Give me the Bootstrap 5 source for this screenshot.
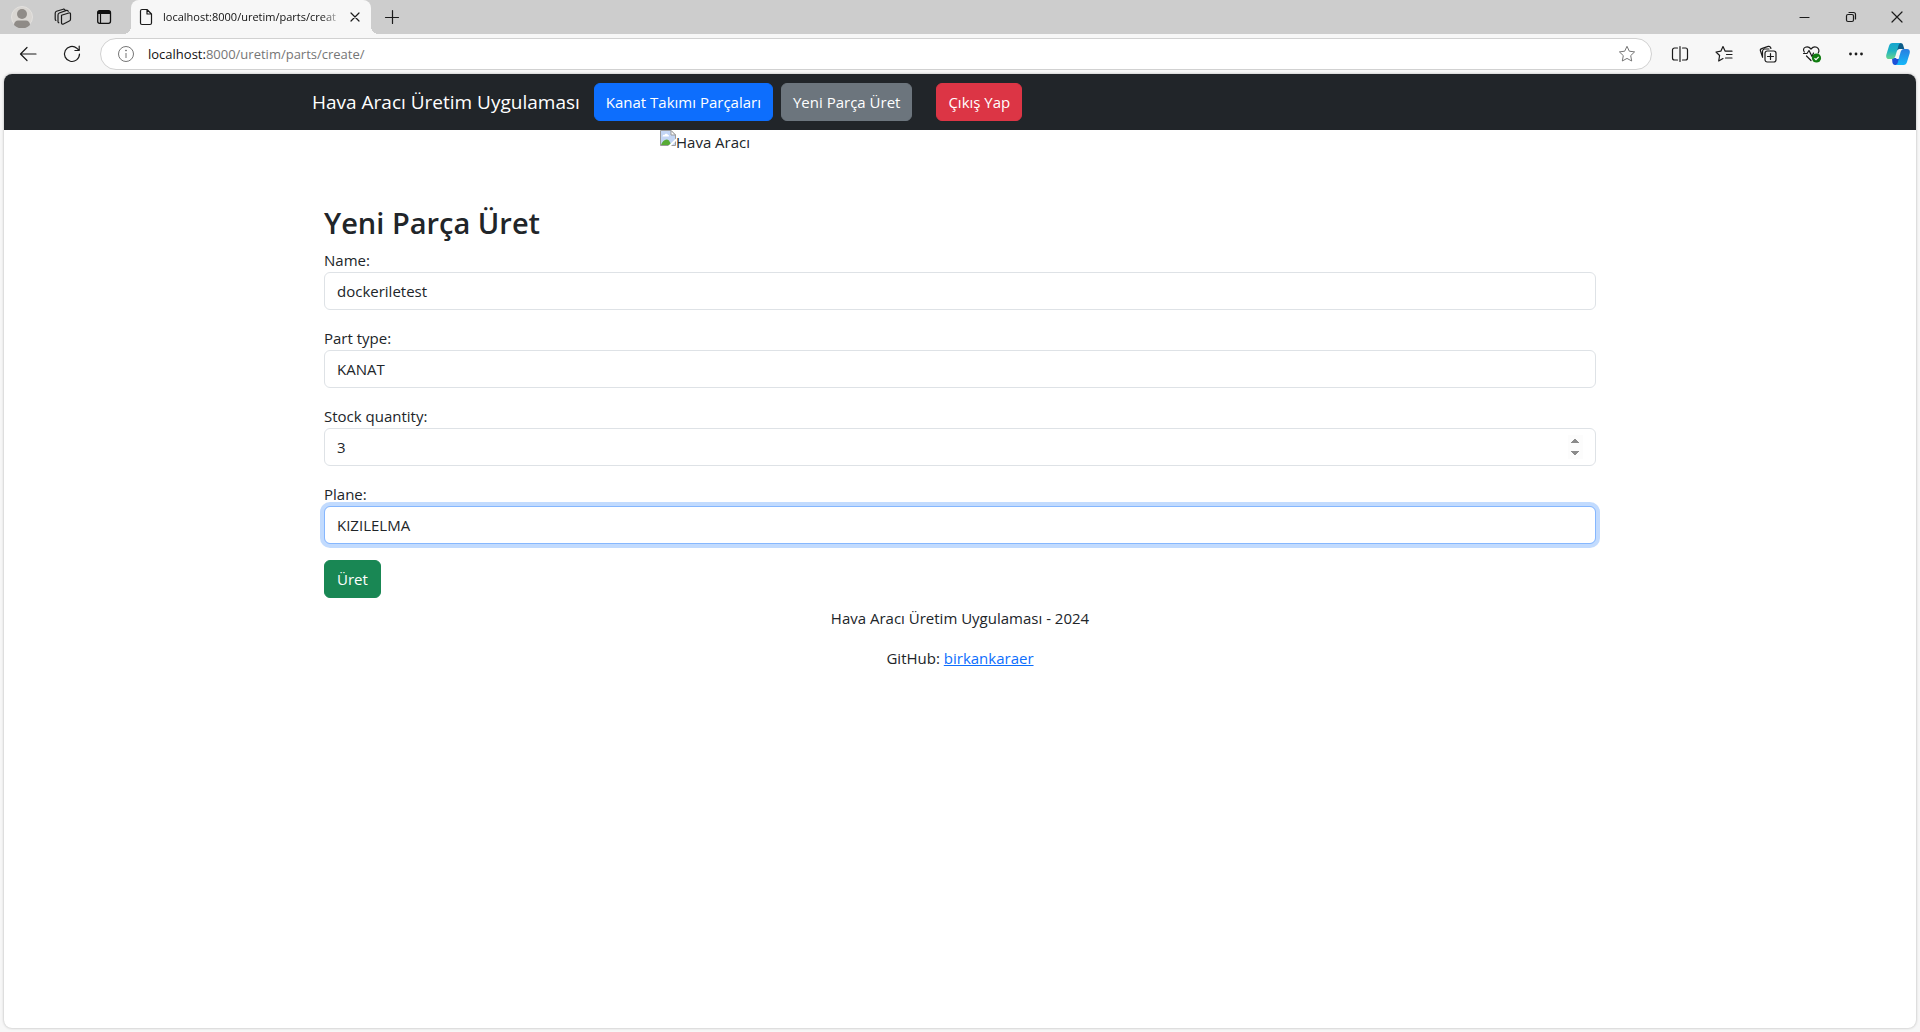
<!DOCTYPE html>
<html lang="tr">
<head>
<meta charset="utf-8">
<meta name="viewport" content="width=device-width, initial-scale=1">
<title>Yeni Parça Üret</title>
<link href="https://cdn.jsdelivr.net/npm/bootstrap@5.3.0/dist/css/bootstrap.min.css" rel="stylesheet">
<style>
:root { --ui-font: "Open Sans", "Noto Sans", "Liberation Sans", sans-serif; }
body { font-family: var(--ui-font); font-size: 15px; line-height: 24px; background: #f7f7f7; }
svg { display: block; flex: none; }
.line-icon { fill: none; stroke: #1b1b1b; stroke-width: 1.2; stroke-linecap: round; stroke-linejoin: round; }
.icon-btn { border: 0; padding: 0; background: none; width: 24px; height: 24px; display: flex; align-items: center; justify-content: center; flex: none; }

/* window frame */
.tab-strip { background: #cdcdcd; height: 34px; }
.strip-start { padding-left: 10px; gap: 17px; width: 131px; }
.browser-tab { position: relative; width: 240px; height: 34px; background: #f7f7f7; border-radius: 8px 8px 0 0; padding: 0 4px 0 6px; font-size: 11px; }
.browser-tab::before, .browser-tab::after { content: ""; position: absolute; bottom: 0; width: 8px; height: 8px; }
.browser-tab::before { left: -8px; background: radial-gradient(circle at 0 0, transparent 8px, #f7f7f7 8px); }
.browser-tab::after { right: -8px; background: radial-gradient(circle at 100% 0, transparent 8px, #f7f7f7 8px); }
.tab-caption { color: #111; -webkit-mask-image: linear-gradient(90deg, #000 88%, transparent); mask-image: linear-gradient(90deg, #000 88%, transparent); }
.new-tab { margin-left: 9px; }
.win-buttons { gap: 22px; padding-right: 11px; }
.tool-row { height: 40px; padding-left: 16px; padding-right: 10px; }
.reload-btn { margin-left: 20px; }
.address-box { height: 32px; border: 1px solid #d1d1d1; border-radius: 16px; background: #fff; margin-left: 16px; padding: 0 12px 0 13px; gap: 10px; font-size: 13px; }
.address-box a { color: #767676; text-decoration: none; }
.address-box a b { color: #111; font-weight: 400; }
.tool-icons { gap: 20px; padding-left: 16px; }
.tool-icons .icon-btn:last-child { margin-left: -2px; }

/* page */
.page-pane { margin: 0 4px 4px; background: #fff; border-radius: 8px; overflow: hidden; box-shadow: 0 0 3px rgba(0,0,0,.28); }
.navbar-brand { font-size: 19px; line-height: 30px; margin-right: 14px; }
.btn, .form-control { font-size: 15px; line-height: 24px; }
.navbar .btn { padding-left: 11px; padding-right: 11px; }
.hero-pic { width: 600px; max-width: 100%; height: 24px; margin-bottom: 50px; }
.form-title { font-size: 29px; line-height: 38px; font-weight: 600; margin-bottom: 6px; }
.field-focused { border-color: #86b7fe; box-shadow: 0 0 0 4px rgba(13,110,253,.25); }
input[type=number]::-webkit-inner-spin-button { opacity: 1; }
</style>
<script src="https://cdn.jsdelivr.net/npm/bootstrap@5.3.0/dist/js/bootstrap.bundle.min.js"></script>
</head>
<body>
<div class="d-flex flex-column min-vh-100">
  <header>
    <div class="tab-strip d-flex align-items-center">
      <div class="strip-start d-flex align-items-center flex-shrink-0">
        <button class="icon-btn" aria-label="Profile"><svg width="22" height="22" viewBox="0 0 22 22"><circle cx="11" cy="11" r="10.5" fill="#d9d6d2" stroke="#e3e1de"/><circle cx="11" cy="8" r="5" fill="#8f8b87"/><path d="M3 19c0-3 2-4.500 4-4.500h8c2 0 4 1.500 4 4.500a11 11 0 0 1-16 0z" fill="#8f8b87"/></svg></button>
        <button class="icon-btn" aria-label="Workspaces"><svg class="line-icon" width="18" height="18" viewBox="0 0 18 18"><path d="M7.500 7.300l7.300-2.300c1-.3 1.700.2 1.700 1.100v5.200c0 .8-.4 1.400-1.200 1.700l-5.800 3c-1.100.5-2 0-2-1.100zM4.800 14.800c-.6-.3-.8-.8-.8-1.400V7c0-1 .4-1.600 1.300-2l7.200-2.600c.8-.2 1.500.2 1.700 1M1.900 12.400c-.5-.3-.7-.8-.7-1.400V5.200c0-1 .4-1.600 1.300-2l6.700-2c.8-.2 1.300 0 1.700.5"/></svg></button>
        <button class="icon-btn" aria-label="Tab actions"><svg width="16" height="16" viewBox="0 0 16 16"><rect x="1.700" y="1.700" width="12.800" height="12.600" rx="2" fill="none" stroke="#111" stroke-width="1.300"/><path d="M1.500 3.500a2 2 0 0 1 2-2h9a2 2 0 0 1 2 2V5h-13z" fill="#111"/><path d="M4.500 5v9" stroke="#111" stroke-width="1.200"/></svg></button>
      </div>
      <div class="browser-tab d-flex align-items-center flex-shrink-0">
        <svg class="line-icon" width="18" height="18" viewBox="0 0 18 18"><path d="M5 1.500h5L14.500 6v9a1.500 1.500 0 0 1-1.500 1.500H5A1.500 1.500 0 0 1 3.500 15V3A1.500 1.500 0 0 1 5 1.500zM10 1.500V6h4.500"/></svg>
        <span class="tab-caption flex-fill text-nowrap ms-2">localhost:8000/uretim/parts/creat</span>
        <button class="icon-btn" aria-label="Close tab"><svg class="line-icon" width="10" height="10" viewBox="0 0 10 10"><path d="M1 1l8 8M9 1L1 9"/></svg></button>
      </div>
      <button class="icon-btn new-tab" aria-label="New tab"><svg class="line-icon" width="16" height="16" viewBox="0 0 16 16"><path d="M8.500 1.500v13M1.500 8.500h13"/></svg></button>
      <div class="win-buttons d-flex ms-auto">
        <button class="icon-btn" aria-label="Minimize"><svg class="line-icon" width="12" height="12" viewBox="0 0 12 12"><path d="M1 6.500h9"/></svg></button>
        <button class="icon-btn" aria-label="Restore"><svg class="line-icon" width="12" height="12" viewBox="0 0 12 12"><rect x="1.500" y="3.500" width="7" height="7" rx="1.500"/><path d="M4 1.500h4.500a2 2 0 0 1 2 2V8"/></svg></button>
        <button class="icon-btn" aria-label="Close"><svg class="line-icon" width="12" height="12" viewBox="0 0 12 12"><path d="M1 1l10 10M11 1L1 11"/></svg></button>
      </div>
    </div>
    <div class="tool-row d-flex align-items-center">
      <button class="icon-btn" aria-label="Back"><svg class="line-icon" width="18" height="16" viewBox="0 0 18 16"><path d="M17 8H1.500M8 1.500L1.500 8 8 14.500"/></svg></button>
      <button class="icon-btn reload-btn" aria-label="Refresh"><svg class="line-icon" width="18" height="18" viewBox="0 0 18 18"><path d="M16.500 9A7.500 7.500 0 1 1 13.800 3.200L16 5.400M16.200 1.200v4.300h-4.300"/></svg></button>
      <div class="address-box d-flex align-items-center flex-fill">
        <button class="icon-btn" aria-label="Site information"><svg width="18" height="18" viewBox="0 0 18 18" fill="none" stroke="#767676"><circle cx="9" cy="9" r="7.500"/><path d="M9 8v5"/><circle cx="9" cy="5.500" r=".5" fill="#767676"/></svg></button>
        <a class="flex-fill" href="#"><b>localhost:</b>8000/uretim/parts/create/</a>
        <button class="icon-btn" aria-label="Add to favorites"><svg width="18" height="18" viewBox="0 0 18 18" fill="none" stroke="#767676" stroke-linejoin="round"><path d="M9 1.300l2.300 4.900 5.300.7-3.900 3.700 1 5.400L9 13.400 4.300 16l1-5.400L1.400 6.900l5.300-.7z"/></svg></button>
      </div>
      <div class="tool-icons d-flex">
        <button class="icon-btn" aria-label="Split screen"><svg class="line-icon" width="18" height="18" viewBox="0 0 18 18"><path d="M6.500 3H3.500a2 2 0 0 0-2 2v8a2 2 0 0 0 2 2h3M11.500 3h3a2 2 0 0 1 2 2v8a2 2 0 0 1-2 2h-3M9 1.500v15"/></svg></button>
        <button class="icon-btn" aria-label="Favorites"><svg class="line-icon" width="18" height="18" viewBox="0 0 18 18"><path d="M10.500 6.200h-.300L8 1.500 5.800 6.200 1 7l3.600 3.500L3.700 16 8 13.600M10.500 6.200h6.500M11.500 9.500H17M10.500 13H17"/></svg></button>
        <button class="icon-btn" aria-label="Collections"><svg class="line-icon" width="18" height="18" viewBox="0 0 18 18"><rect x="6" y="6" width="11" height="11" rx="2.200"/><path d="M11.500 8.500v6M8.500 11.500h6M3.600 12.300L1.500 6c-.4-1 .1-2 1.100-2.400l6.600-2.200c1-.3 2 .1 2.400 1.100l.3 1M3.500 12V6.200C3.700 5 4 4 5.500 4H10"/></svg></button>
        <button class="icon-btn" aria-label="Browser essentials"><svg width="20" height="18" viewBox="0 0 20 18"><path class="line-icon" d="M2.300 7C.9 4.800 1.500 3 3.300 2.300 5.500 1.200 7.300 2 9 4c1.700-2 3.500-2.800 5.700-1.700C17 3.500 17.600 6 16.200 8M1.500 8.500H5L7 5.500l3 6 1.500-3.500M4.500 11l4.500 4.500"/><circle cx="14.500" cy="13" r="4.600" fill="#107c10"/><path d="M12.500 13.200l1.500 1.400 2.700-2.800" fill="none" stroke="#fff" stroke-width="1.200"/></svg></button>
        <button class="icon-btn" aria-label="Settings and more"><svg width="16" height="16" viewBox="0 0 16 16" fill="#1b1b1b"><circle cx="2.500" cy="8" r="1.400"/><circle cx="8" cy="8" r="1.400"/><circle cx="13.500" cy="8" r="1.400"/></svg></button>
        <button class="icon-btn" aria-label="Copilot"><svg width="24" height="24" viewBox="0 0 24 24">
          <defs>
            <linearGradient id="cpA" x1="0" y1="0" x2="0" y2="1"><stop offset="0" stop-color="#16a5cf"/><stop offset=".5" stop-color="#1fb3c2"/><stop offset="1" stop-color="#68d58d"/></linearGradient>
            <linearGradient id="cpB" x1="0" y1="0" x2="0" y2="1"><stop offset="0" stop-color="#2a7de0"/><stop offset="1" stop-color="#15b8f8"/></linearGradient>
          </defs>
          <path d="M12 1h2.500c1.500 0 2.200.8 2.700 2.300L18.300 7H14c-2 0-3 1-3.500 3z" fill="#0d5c88"/>
          <path d="M6 16h5l3-8-1 12c-.5 2-1.500 3-3 3H9c-1.500 0-2.200-1-2.600-2.500z" fill="#1e50d8"/>
          <path d="M10.200 17l3-10h2.500l-3 10z" fill="#f7f7f7"/>
          <path d="M6.500 1H15c-1.500.3-2.200 1.500-2.700 3.200L9.500 13.800C9 15.600 8 17 6 17H3c-2.500 0-3.300-2-2.600-4.500L3 4C3.600 2 4.600 1 6.500 1z" fill="url(#cpA)"/>
          <path d="M17.500 23H9.500c1.500-.3 2-1.500 2.500-3.200l2.500-9.600C15 8.400 16 7 18 7h3c2.500 0 3.300 2 2.600 4.500L21 20c-.6 2-1.600 3-3.500 3z" fill="url(#cpB)"/>
        </svg></button>
      </div>
    </div>
  </header>

  <div class="page-pane flex-fill">
    <nav class="navbar navbar-expand-lg navbar-dark bg-dark">
      <div class="container justify-content-start">
        <a class="navbar-brand" href="#">Hava Aracı Üretim Uygulaması</a>
        <div class="d-flex gap-2">
          <a class="btn btn-primary" href="#">Kanat Takımı Parçaları</a>
          <a class="btn btn-secondary" href="#">Yeni Parça Üret</a>
          <button class="btn btn-danger ms-3" type="button">Çıkış Yap</button>
        </div>
      </div>
    </nav>
    <div class="hero-pic mx-auto d-flex">
      <svg width="16" height="16" viewBox="0 0 16 16"><path d="M.5.500h10.500L15.500 5v10.500H.5z" fill="#c3d5f4" stroke="#9b9b9b"/><path d="M2.500 6.500c0-1.400 1.200-1.800 2-1.600.5-1.700 3-1.700 3.500 0 1.300 0 1.500 1.600.5 1.600z" fill="#fff"/><path d="M1 15c1.500-4 5-7 8-4.500L11.500 15z" fill="#57ab35"/><path d="M16 8.500V11l-5 5H8z" fill="#fff"/><path d="M11 .5V5h4.500z" fill="#fff" stroke="#9b9b9b"/></svg>
      <span>Hava Aracı</span>
    </div>
    <main class="container">
      <div class="px-2 mx-1">
        <h2 class="form-title">Yeni Parça Üret</h2>
        <form>
          <div class="mb-3">
            <label class="d-block" for="partName">Name:</label>
            <input class="form-control" id="partName" type="text" value="dockeriletest">
          </div>
          <div class="mb-3">
            <label class="d-block" for="partType">Part type:</label>
            <select class="form-control" id="partType"><option>KANAT</option></select>
          </div>
          <div class="mb-3">
            <label class="d-block" for="stockQty">Stock quantity:</label>
            <input class="form-control" id="stockQty" type="number" value="3">
          </div>
          <div class="mb-3">
            <label class="d-block" for="planeName">Plane:</label>
            <select class="form-control field-focused" id="planeName"><option>KIZILELMA</option></select>
          </div>
          <button class="btn btn-success" type="button">Üret</button>
        </form>
      </div>
    </main>
    <footer class="text-center mt-2">
      <p>Hava Aracı Üretim Uygulaması - 2024</p>
      <p>GitHub: <a href="#">birkankaraer</a></p>
    </footer>
  </div>
</div>
</body>
</html>
